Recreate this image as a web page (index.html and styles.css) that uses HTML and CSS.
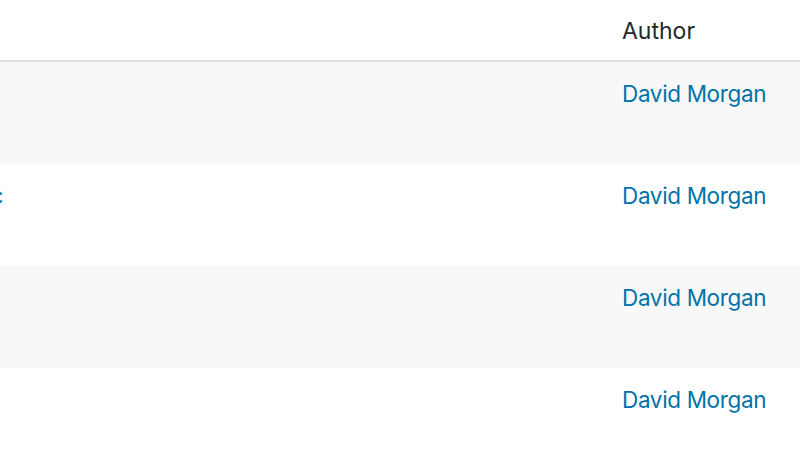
FILE: index.html
```html
<!DOCTYPE html>
<html lang="en">
<head>
    <meta charset="UTF-8">
    <meta name="viewport" content="width=device-width, initial-scale=1.0">
    <title>Topics</title>
    <link rel="stylesheet" href="styles.css">
</head>
<body>
    <div class="list-table">
        <div class="row head">
            <div class="cell title"></div>
            <div class="cell author">Author</div>
        </div>

        <div class="row alt">
            <div class="cell title"></div>
            <div class="cell author"><a href="#">David Morgan</a></div>
        </div>

        <div class="row">
            <div class="cell title">
                <div class="clip"><a href="#">Topic</a></div>
            </div>
            <div class="cell author"><a href="#">David Morgan</a></div>
        </div>

        <div class="row alt">
            <div class="cell title"></div>
            <div class="cell author"><a href="#">David Morgan</a></div>
        </div>

        <div class="row">
            <div class="cell title"></div>
            <div class="cell author"><a href="#">David Morgan</a></div>
        </div>
    </div>
</body>
</html>
```

FILE: styles.css
```css
html, body {
    margin: 0;
    padding: 0;
    background: white;
    overflow: hidden;
}
body {
    font-family: Inter, "Liberation Sans", Arial, sans-serif;
    font-size: 23px;
    line-height: 32px;
    color: #23282d;
}
.list-table {
    display: flex;
    flex-direction: column;
}
.row {
    display: grid;
    grid-template-columns: 1fr 178px;
    height: 102px;
    box-sizing: border-box;
    padding-top: 16px;
}
.row.head {
    height: 62px;
    padding-top: 15px;
    border-bottom: 2px solid #e1e1e1;
}
.row.alt {
    background: #f8f8f8;
}
.cell.title {
    overflow: hidden;
}
.clip {
    width: 3px;
    overflow: hidden;
    display: flex;
    justify-content: flex-end;
}
a {
    color: #0073aa;
    text-decoration: none;
    font-size: 22.5px;
    letter-spacing: -0.35px;
}
```
